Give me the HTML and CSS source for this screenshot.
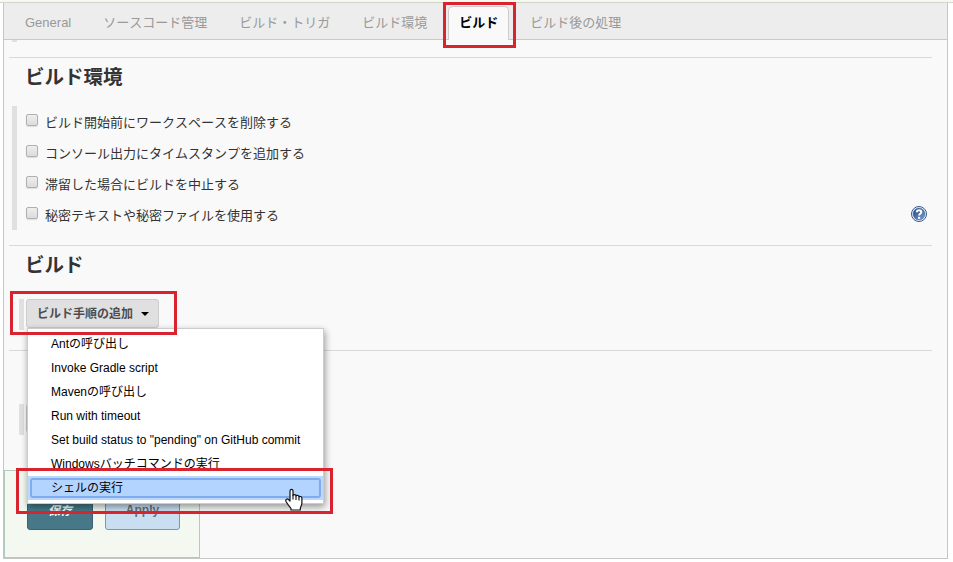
FILE: index.html
```html
<!DOCTYPE html>
<html lang="ja">
<head>
<meta charset="utf-8">
<title>ビルド</title>
<link rel="stylesheet" href="styles.css">
</head>
<body>
<div class="strip"></div>
<main class="panel">
  <nav class="tabs">
    <a class="tab">General</a>
    <a class="tab">ソースコード管理</a>
    <a class="tab">ビルド・トリガ</a>
    <a class="tab">ビルド環境</a>
    <a class="tab active">ビルド<span class="mark mark-tab"></span></a>
    <a class="tab">ビルド後の処理</a>
  </nav>
  <div class="stub"></div>
  <section class="section environment">
    <h2>ビルド環境</h2>
    <div class="options">
      <label class="option"><span class="check"></span><span class="text">ビルド開始前にワークスペースを削除する</span></label>
      <label class="option"><span class="check"></span><span class="text">コンソール出力にタイムスタンプを追加する</span></label>
      <label class="option"><span class="check"></span><span class="text">滞留した場合にビルドを中止する</span></label>
      <label class="option"><span class="check"></span><span class="text">秘密テキストや秘密ファイルを使用する</span>
        <svg class="help" width="16" height="16" viewBox="0 0 16 16">
          <defs><linearGradient id="hg" x1="0" y1="0" x2="1" y2="1"><stop offset="0" stop-color="#1f4788"/><stop offset="1" stop-color="#7ba0cd"/></linearGradient></defs>
          <circle cx="8" cy="8" r="7.5" fill="#fff" stroke="#33588f" stroke-width="1"/>
          <circle cx="8" cy="8" r="6" fill="url(#hg)" stroke="#3a629c" stroke-width=".5"/>
          <path d="M5.8 6.2C5.8 3.5 10.3 3.5 10.3 6.1C10.3 7.7 8.1 7.7 8.1 9.6" fill="none" stroke="#fff" stroke-width="2"/>
          <rect x="7" y="10.8" width="2.2" height="2" fill="#fff"/>
        </svg>
      </label>
    </div>
  </section>
  <section class="section build">
    <h2>ビルド</h2>
    <div class="step">
      <button class="add">ビルド手順の追加<svg width="8" height="4" viewBox="0 0 8 4"><path d="M0 0H8L4 4Z" fill="#000"/></svg></button>
      <ul class="menu">
        <li>Antの呼び出し</li>
        <li>Invoke Gradle script</li>
        <li>Mavenの呼び出し</li>
        <li>Run with timeout</li>
        <li>Set build status to "pending" on GitHub commit</li>
        <li>Windowsバッチコマンドの実行</li>
        <li class="selected"><span>シェルの実行</span></li>
      </ul>
      <span class="mark mark-add"></span>
      <span class="mark mark-shell"></span>
      <svg class="cursor" width="18" height="24" viewBox="0 0 18 24">
        <path d="M5 13V3C5 .8 8 .8 8 3V7.5C8 6.1 11 6.2 11 8C11.2 6.8 14 7.1 14 8.9C14.5 8 16.9 8.3 16.9 10.3V15C16.9 17.5 15.3 18.5 15.3 21V22H6V20.5C4.5 18.5 2.5 16.2 1 13.5C.1 11.3 2.4 10.3 3.5 11.5Z" fill="#fff" stroke="#111" stroke-width="1.2" stroke-linejoin="round"/>
        <path d="M8 7V11.5M11 8V12M14 9V12.5" stroke="#111" stroke-width="1.1"/>
      </svg>
    </div>
  </section>
  <section class="section after">
    <div class="step"><button class="add"></button></div>
  </section>
  <footer class="actions">
    <button class="save">保存</button>
    <button class="apply">Apply</button>
  </footer>
</main>
</body>
</html>
```
FILE: styles.css
```css
* { box-sizing: border-box; }
body {
  margin: 0;
  height: 562px;
  overflow: hidden;
  background: #fff;
  color: #333;
  font: 13px/20px "Liberation Sans", "Noto Sans CJK JP", sans-serif;
  font-kerning: none;
}
.strip { height: 3px; background: #f6f9ef; border-bottom: 1px solid #d2d5cc; }
.panel {
  display: flex;
  flex-direction: column;
  width: 945px;
  height: 556px;
  margin-left: 3px;
  border: 1px solid #c6c6c6;
  border-top: 0;
  background: #f9f9f9;
}
.tabs {
  display: flex;
  gap: 10px;
  height: 37px;
  flex: none;
  padding: 3px 10px 0;
  background: #ededed;
  border-bottom: 1px solid #c9c9c9;
}
.tab {
  position: relative;
  height: 34px;
  padding: 6px 10px 0;
  border: 1px solid transparent;
  border-bottom: 0;
  border-radius: 5px 5px 0 0;
  color: #999;
  white-space: nowrap;
}
.tab.active { background: #f9f9f9; border-color: #ccc; color: #000; font-weight: bold; }
.mark { position: absolute; border: 3px solid #d9232e; z-index: 5; }
.mark-tab { left: -6px; top: -5px; width: 73px; height: 46px; }
.stub { flex: none; width: 5px; height: 2px; margin-left: 8px; background: #e0e0e0; }
.section { flex: none; margin: 0 15px 0 5px; border-top: 1px solid #d9d9d9; }
.environment { height: 188px; margin-top: 15px; }
.build { height: 105px; }
.after { height: 120px; padding-top: 53px; }
h2 { margin: 0; padding: 4px 0 0 16px; height: 48px; font-size: 19.5px; line-height: 30px; }
.options { margin-left: 3px; border-left: 5px solid #e0e0e0; }
.option { display: flex; height: 31px; padding: 6px 5px 0 9px; }
.text { padding-top: 1px; }
.check {
  width: 12px;
  height: 12px;
  margin: 2px 7px 0 0;
  border: 1px solid #b0b0b0;
  border-radius: 2px;
  background: linear-gradient(#eee, #dcdcdc);
  box-shadow: 0 1px 1px #ddd;
}
.help { margin: 1px 0 0 auto; }
.build h2 { height: 53px; }
.step {
  position: relative;
  display: flex;
  width: 145px;
  height: 31px;
  margin-left: 10px;
  padding-left: 2px;
  border-left: 5px solid #e0e0e0;
}
.add {
  display: flex;
  align-items: center;
  gap: 8px;
  width: 133px;
  height: 29px;
  padding: 0 9px 2px 10px;
  border: 1px solid #ccc;
  border-radius: 3px;
  background: #e0e0e0;
  color: #4d4d4d;
  font: bold 12px "Liberation Sans", "Noto Sans CJK JP", sans-serif;
  font-kerning: none;
  white-space: nowrap;
}
.add svg { flex: none; margin-top: 2px; }
.menu {
  position: absolute;
  left: 3px;
  top: 29px;
  z-index: 3;
  width: 297px;
  height: 176px;
  margin: 0;
  padding: 3px 0;
  list-style: none;
  border: 1px solid #ccc;
  background: #fff;
  box-shadow: 1px 3px 7px rgba(0, 0, 0, .4);
  color: #000;
  font-size: 12px;
  line-height: 24px;
}
.menu li { height: 24px; padding-left: 23px; white-space: nowrap; }
.menu .selected { padding: 2px; background: #bed8fc; }
.selected span {
  display: block;
  height: 20px;
  padding-left: 19px;
  border: 2px solid #7eacef;
  border-radius: 3px;
  background: #b3d4ff;
  line-height: 16px;
}
.mark-add { left: -14px; top: -8px; width: 167px; height: 44px; }
.mark-shell { left: -8px; top: 169px; width: 317px; height: 46px; }
.cursor { position: absolute; left: 261px; top: 189px; z-index: 6; }
.actions {
  display: flex;
  gap: 12px;
  width: 197px;
  height: 88px;
  flex: none;
  margin-left: -1px;
  padding: 21px 0 0 22px;
  border: 1px solid #b5cabe;
  border-left-width: 2px;
  background: #f3f8f1;
}
.actions button {
  height: 38px;
  padding: 0 0 3px;
  border-radius: 3px;
  font: bold 12px "Liberation Sans", "Noto Sans CJK JP", sans-serif;
}
.save { width: 66px; border: 1px solid #386376; background: #467888; color: #fff; }
.actions .save { font-style: italic; }
.apply { width: 75px; border: 1px solid #7198c4; background: #cadef1; color: #667078; }
```
